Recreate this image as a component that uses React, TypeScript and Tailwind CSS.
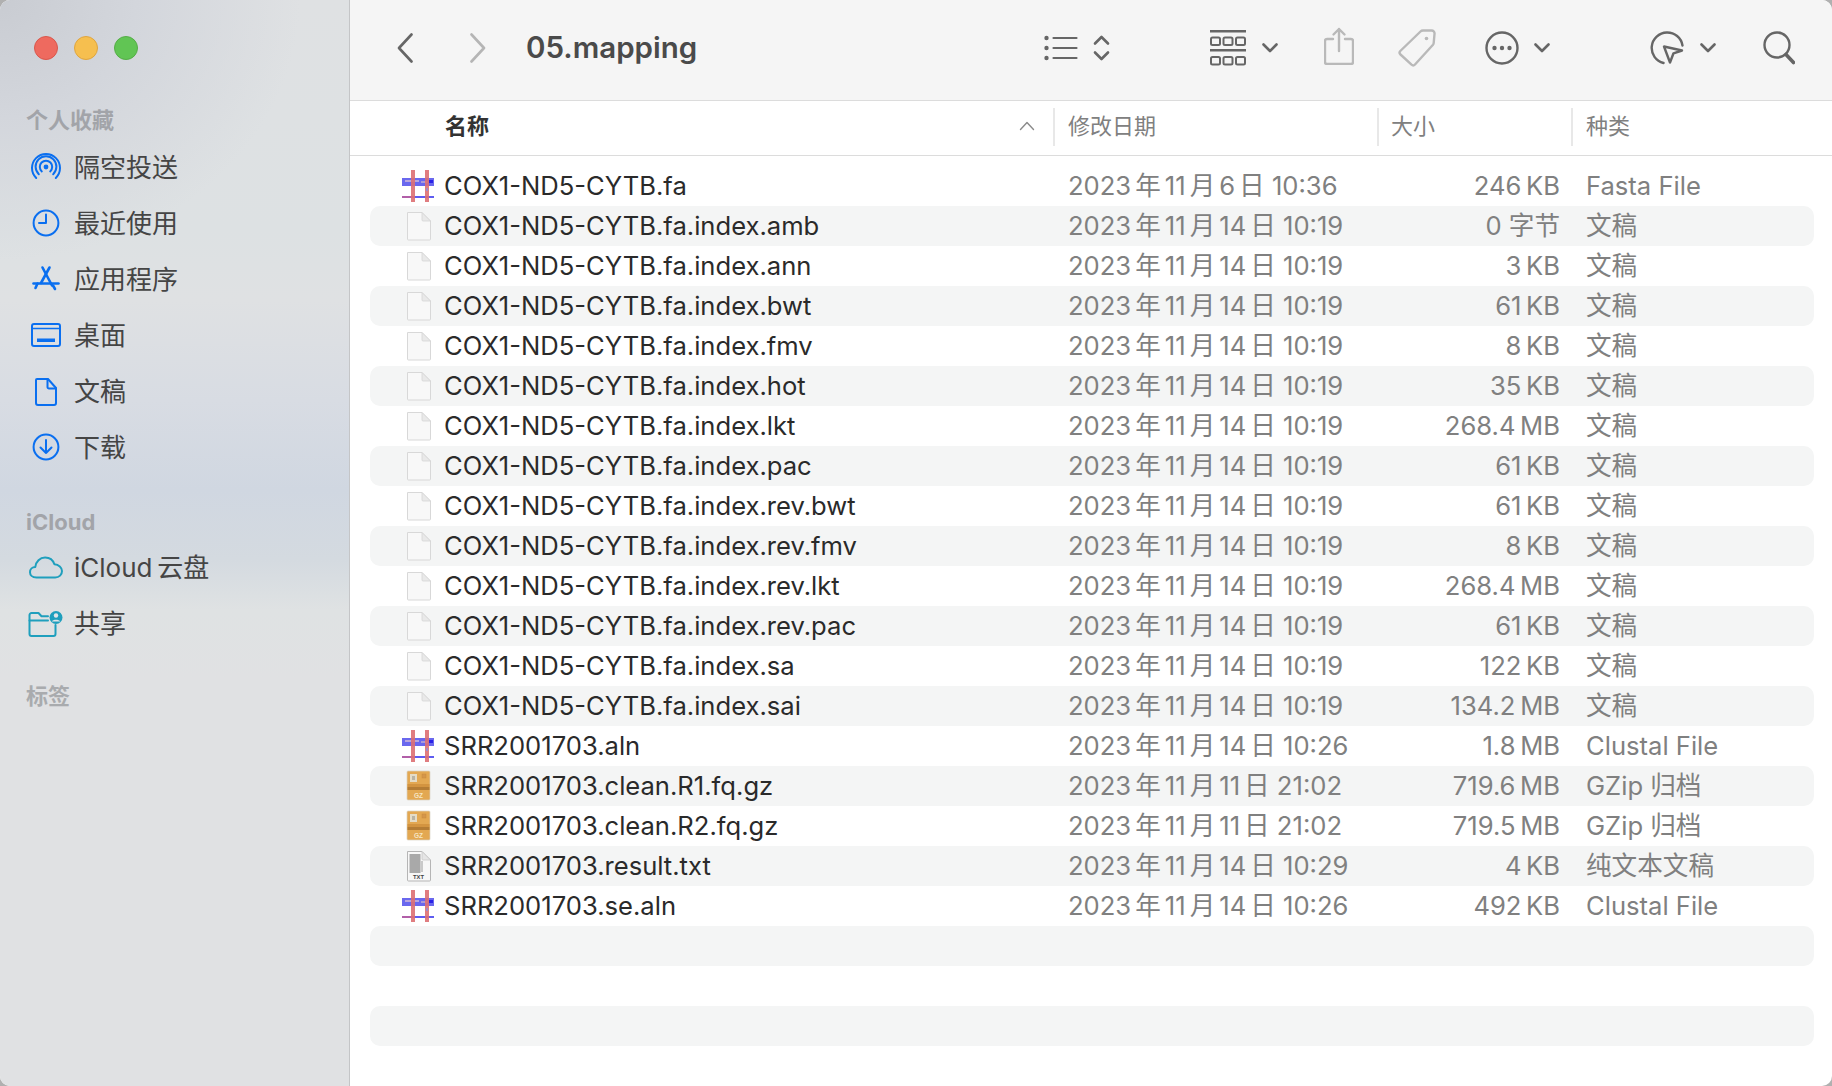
const files = [
  { name: 'COX1-ND5-CYTB.fa', date: '2023年11月6日 10:36', size: '246 KB', kind: 'Fasta File', icon: 'seq' },
  { name: 'COX1-ND5-CYTB.fa.index.amb', date: '2023年11月14日 10:19', size: '0 字节', kind: '文稿', icon: 'doc' },
  { name: 'COX1-ND5-CYTB.fa.index.ann', date: '2023年11月14日 10:19', size: '3 KB', kind: '文稿', icon: 'doc' },
  { name: 'COX1-ND5-CYTB.fa.index.bwt', date: '2023年11月14日 10:19', size: '61 KB', kind: '文稿', icon: 'doc' },
  { name: 'COX1-ND5-CYTB.fa.index.fmv', date: '2023年11月14日 10:19', size: '8 KB', kind: '文稿', icon: 'doc' },
  { name: 'COX1-ND5-CYTB.fa.index.hot', date: '2023年11月14日 10:19', size: '35 KB', kind: '文稿', icon: 'doc' },
  { name: 'COX1-ND5-CYTB.fa.index.lkt', date: '2023年11月14日 10:19', size: '268.4 MB', kind: '文稿', icon: 'doc' },
  { name: 'COX1-ND5-CYTB.fa.index.pac', date: '2023年11月14日 10:19', size: '61 KB', kind: '文稿', icon: 'doc' },
  { name: 'COX1-ND5-CYTB.fa.index.rev.bwt', date: '2023年11月14日 10:19', size: '61 KB', kind: '文稿', icon: 'doc' },
  { name: 'COX1-ND5-CYTB.fa.index.rev.fmv', date: '2023年11月14日 10:19', size: '8 KB', kind: '文稿', icon: 'doc' },
  { name: 'COX1-ND5-CYTB.fa.index.rev.lkt', date: '2023年11月14日 10:19', size: '268.4 MB', kind: '文稿', icon: 'doc' },
  { name: 'COX1-ND5-CYTB.fa.index.rev.pac', date: '2023年11月14日 10:19', size: '61 KB', kind: '文稿', icon: 'doc' },
  { name: 'COX1-ND5-CYTB.fa.index.sa', date: '2023年11月14日 10:19', size: '122 KB', kind: '文稿', icon: 'doc' },
  { name: 'COX1-ND5-CYTB.fa.index.sai', date: '2023年11月14日 10:19', size: '134.2 MB', kind: '文稿', icon: 'doc' },
  { name: 'SRR2001703.aln', date: '2023年11月14日 10:26', size: '1.8 MB', kind: 'Clustal File', icon: 'seq' },
  { name: 'SRR2001703.clean.R1.fq.gz', date: '2023年11月11日 21:02', size: '719.6 MB', kind: 'GZip 归档', icon: 'gz' },
  { name: 'SRR2001703.clean.R2.fq.gz', date: '2023年11月11日 21:02', size: '719.5 MB', kind: 'GZip 归档', icon: 'gz' },
  { name: 'SRR2001703.result.txt', date: '2023年11月14日 10:29', size: '4 KB', kind: '纯文本文稿', icon: 'txt' },
  { name: 'SRR2001703.se.aln', date: '2023年11月14日 10:26', size: '492 KB', kind: 'Clustal File', icon: 'seq' }
]

const blue = '#0a6ff0'
const teal = '#1f9fbd'

// sizes use a narrow gap before the unit
const tightSize = (size: string) => size.replace(/ ([KM]B)/, '\u2009$1')

function SeqIcon() {
  return (
    <svg width="32" height="40" viewBox="0 0 32 40">
      <rect x="0" y="12" width="32" height="8" fill="#6a68ee" />
      <rect x="3" y="14" width="14" height="2" fill="#b9a6dc" />
      <rect x="19" y="15" width="7" height="2" fill="#a99ad8" />
      <rect x="27" y="14" width="4" height="3" fill="#2a22e8" />
      <rect x="0" y="30" width="12" height="2" fill="#b25fa8" />
      <rect x="12" y="30" width="20" height="2" fill="#5f5cf0" />
      <rect x="9" y="4" width="4" height="32" fill="#dd6f72" fillOpacity="0.9" />
      <rect x="23" y="4" width="4" height="32" fill="#dd6f72" fillOpacity="0.9" />
      <rect x="24" y="22" width="2" height="3" fill="#a08ac8" />
    </svg>
  )
}

function DocIcon() {
  return (
    <svg width="32" height="40" viewBox="0 0 32 40">
      <path d="M5.5 6.5H20L28.5 15V33a1 1 0 0 1-1 1h-21a1 1 0 0 1-1-1z" fill="#f8f8f8" stroke="#d8d8d8" />
      <path d="M20 6.5V14a1 1 0 0 0 1 1h7.5z" fill="#e9e9e9" stroke="#d4d4d4" strokeWidth="0.8" />
    </svg>
  )
}

function GzIcon() {
  return (
    <svg width="32" height="40" viewBox="0 0 32 40">
      <rect x="5" y="5" width="23" height="29" rx="1" fill="#e3a852" stroke="#d9d2c4" strokeWidth="0.7" />
      <rect x="5.5" y="18" width="22" height="3" fill="#d39440" />
      <rect x="5.5" y="21" width="22" height="3" fill="#b47c34" />
      <rect x="8" y="8" width="7" height="8" fill="#e5dcc6" />
      <rect x="10" y="10" width="3" height="4" fill="#b9b3a4" />
      <rect x="20" y="8" width="4" height="4" fill="#d4964a" stroke="#c98a3e" strokeWidth="0.5" />
      <text x="16.5" y="32" textAnchor="middle" fontSize="6.5" fontWeight="700" fill="#f6e6c4" fontFamily="Liberation Sans, sans-serif">GZ</text>
    </svg>
  )
}

function TxtIcon() {
  return (
    <svg width="32" height="40" viewBox="0 0 32 40">
      <path d="M5.5 5.5H20L28.5 14V34a1 1 0 0 1-1 1h-21a1 1 0 0 1-1-1z" fill="#f7f7f7" stroke="#b5b5b5" />
      <path d="M20 5.5V13a1 1 0 0 0 1 1h7.5z" fill="#e5e5e5" stroke="#c9c9c9" strokeWidth="0.8" />
      <rect x="7.5" y="8" width="11" height="19" fill="#a9a9a9" />
      <rect x="18.5" y="15" width="2.5" height="11" fill="#c9c9c9" />
      <text x="16.5" y="33" textAnchor="middle" fontSize="5.8" fontWeight="700" fill="#444" fontFamily="Liberation Sans, sans-serif">TXT</text>
    </svg>
  )
}

function FileIcon({ type }: { type: string }) {
  if (type === 'seq') return <SeqIcon />
  if (type === 'gz') return <GzIcon />
  if (type === 'txt') return <TxtIcon />
  return <DocIcon />
}

function Chevron({ className }: { className: string }) {
  return (
    <svg className={className} width="16" height="10" viewBox="0 0 16 10" fill="none" stroke="#666" strokeWidth="2.6" strokeLinecap="round" strokeLinejoin="round">
      <path d="M1.5 1.5 8 8l6.5-6.5" />
    </svg>
  )
}

function SideIcon({ name }: { name: string }) {
  const stroke = name === 'cloud' || name === 'shared' ? teal : blue
  return (
    <svg width="36" height="36" viewBox="0 0 36 36" fill="none" stroke={stroke} strokeWidth="2" strokeLinecap="round" strokeLinejoin="round">
      {name === 'airdrop' && (
        <>
          <circle cx="18" cy="18" r="2.4" fill={stroke} stroke="none" />
          <path d="M13.8 22.4a6.2 6.2 0 1 1 8.4 0" />
          <path d="M10.8 25.2a10.4 10.4 0 1 1 14.4 0" />
          <path d="M8.2 29a14 14 0 1 1 19.6 0" />
        </>
      )}
      {name === 'clock' && (
        <>
          <circle cx="18" cy="18" r="12.4" />
          <path d="M18 9.5V18h-7" />
        </>
      )}
      {name === 'apps' && (
        <g strokeWidth="2.6">
          <path d="M14.5 6.5 24 24.5" />
          <path d="M21.5 6.5 13 22" />
          <path d="M5.5 22.5h25" />
          <path d="M9.5 22.5 7.5 27" />
          <path d="M25 24.5 27 28" />
        </g>
      )}
      {name === 'desktop' && (
        <>
          <rect x="4" y="7" width="28" height="22" rx="2" />
          <path d="M4 11.5h28" strokeWidth="1.4" />
          <rect x="9" y="21.5" width="18" height="3.5" fill={stroke} stroke="none" />
        </>
      )}
      {name === 'doc' && (
        <>
          <path d="M9 6h11l8 9v15a2 2 0 0 1-2 2H10a2 2 0 0 1-2-2V7a1 1 0 0 1 1-1z" />
          <path d="M19.5 6v8a1.5 1.5 0 0 0 1.5 1.5h7" />
        </>
      )}
      {name === 'download' && (
        <>
          <circle cx="18" cy="18" r="12.4" />
          <path d="M18 11v13M12.5 18.5 18 24l5.5-5.500" />
        </>
      )}
      {name === 'cloud' && (
        <path d="M8.500 28.500C4 28.500 2 25.800 2 23.200c0-3 2.400-5.200 5.300-5.200.5-5.500 4.700-9.500 9.800-9.500 4.600 0 8 2.800 9.300 6.800 4.200.2 7.600 3.100 7.600 6.800 0 3.600-2.800 6.400-6.800 6.400z" />
      )}
      {name === 'shared' && (
        <>
          <path d="M27.500 20v9a2 2 0 0 1-2 2H3.500a2 2 0 0 1-2-2V10a2 2 0 0 1 2-2h7l3 3.200H20" />
          <path d="M1.500 15.500H20" />
          <circle cx="28" cy="12.500" r="6.500" fill={stroke} stroke="none" />
          <circle cx="28" cy="10.500" r="2.200" fill="#e2e5e8" stroke="none" />
          <path d="M23.800 16.500c1-2.300 7.400-2.300 8.400 0z" fill="#e2e5e8" stroke="none" />
        </>
      )}
    </svg>
  )
}

const favorites = [
  { label: '隔空投送', icon: 'airdrop' },
  { label: '最近使用', icon: 'clock' },
  { label: '应用程序', icon: 'apps' },
  { label: '桌面', icon: 'desktop' },
  { label: '文稿', icon: 'doc' },
  { label: '下载', icon: 'download' }
]

const cloudItems = [
  { label: 'iCloud\u2009云盘', icon: 'cloud' },
  { label: '共享', icon: 'shared' }
]

function SideItem({ label, icon }: { label: string; icon: string }) {
  return (
    <div className="flex h-[56px] items-center gap-[10px] pl-[28px] text-[26px] text-[#454545]">
      <SideIcon name={icon} />
      <span>{label}</span>
    </div>
  )
}

function Sidebar() {
  return (
    <aside className="w-[350px] shrink-0 border-r border-[#c4c5c7] bg-[radial-gradient(ellipse_300px_260px_at_0px_0px,#c9ccd2_0%,#d3d6dc_45%,transparent_100%),linear-gradient(180deg,#dfe1e3_0px,#dde1e3_230px,#dfe1e3_300px,#d8dce3_400px,#d0d7e1_490px,#d4dae0_560px,#dfe2e3_610px,#e0e1e3_680px,#e0e1e3_100%)]">
      <div className="flex gap-[16px] pl-[34px] pt-[36px]">
        <div className="h-[24px] w-[24px] rounded-full border border-[#d9574c] bg-[#ee6a5f]" />
        <div className="h-[24px] w-[24px] rounded-full border border-[#dfa53f] bg-[#f6bf4f]" />
        <div className="h-[24px] w-[24px] rounded-full border border-[#55ad47] bg-[#61c554]" />
      </div>
      <div className="mt-[43px] mb-[2px] flex h-[34px] items-center pl-[26px] text-[22px] font-bold text-[#a2a4a9]">个人收藏</div>
      {favorites.map((item) => (
        <SideItem key={item.label} {...item} />
      ))}
      <div className="mt-[30px] flex h-[34px] items-center pl-[26px] text-[22px] font-bold text-[#a2a4a9]">iCloud</div>
      {cloudItems.map((item) => (
        <SideItem key={item.label} {...item} />
      ))}
      <div className="mt-[28px] flex h-[34px] items-center pl-[26px] text-[22px] font-bold text-[#a9abae]">标签</div>
    </aside>
  )
}

function Toolbar() {
  return (
    <div className="flex h-[101px] shrink-0 items-center border-b border-[#dcdcdc] bg-[#f5f5f5] pb-[5px] pr-[37px]">
      <svg className="ml-[47px]" width="16" height="30" viewBox="0 0 16 30" fill="none" stroke="#666" strokeWidth="2.6" strokeLinecap="round" strokeLinejoin="round">
        <path d="M14.500 1.500 2 15l12.500 13.500" />
      </svg>
      <svg className="ml-[57px]" width="16" height="30" viewBox="0 0 16 30" fill="none" stroke="#b5b5b5" strokeWidth="2.6" strokeLinecap="round" strokeLinejoin="round">
        <path d="M1.500 1.500 14 15 1.500 28.500" />
      </svg>
      <div className="ml-[40px] flex-1 text-[29.5px] font-semibold text-[#4a4a4a]">05.mapping</div>

      <svg width="66" height="26" viewBox="0 0 66 26" fill="none" stroke="#666" strokeLinecap="round" strokeLinejoin="round">
        <g fill="#666" stroke="none">
          <circle cx="2.500" cy="3" r="2.200" />
          <circle cx="2.500" cy="13" r="2.200" />
          <circle cx="2.500" cy="23" r="2.200" />
        </g>
        <path d="M9.500 3h23M9.500 13h23M9.500 23h23" strokeWidth="2.200" />
        <path d="M51 8.500 57.500 2 64 8.500M51 17.500l6.500 6.500 6.500-6.500" strokeWidth="2.600" />
      </svg>

      <svg className="ml-[100px]" width="36" height="36" viewBox="0 0 36 36" fill="none" stroke="#666">
        <path d="M0 1.200h36M0 20.200h36" strokeWidth="2.400" />
        <g strokeWidth="2">
          <rect x="1" y="7.500" width="9" height="7.500" rx="1.500" />
          <rect x="13.500" y="7.500" width="9" height="7.500" rx="1.500" />
          <rect x="26" y="7.500" width="9" height="7.500" rx="1.500" />
          <rect x="1" y="27" width="9" height="7.500" rx="1.500" />
          <rect x="13.500" y="27" width="9" height="7.500" rx="1.500" />
          <rect x="26" y="27" width="9" height="7.500" rx="1.500" />
        </g>
      </svg>
      <Chevron className="ml-[16px]" />

      <svg className="ml-[46px] mb-[3px]" width="30" height="38" viewBox="0 0 30 38" fill="none" stroke="#b9b9b9" strokeWidth="2.400" strokeLinecap="round" strokeLinejoin="round">
        <path d="M9 12H3a2 2 0 0 0-2 2v21a2 2 0 0 0 2 2h24a2 2 0 0 0 2-2V14a2 2 0 0 0-2-2h-6" />
        <path d="M15 24V2M9.500 7.500 15 2l5.500 5.500" />
      </svg>

      <svg className="ml-[44px]" width="38" height="38" viewBox="0 0 38 38" fill="none" stroke="#b9b9b9" strokeWidth="2.400" strokeLinejoin="round">
        <path d="M25 1.500h8.500a3 3 0 0 1 3 3.500l-.8 9a3 3 0 0 1-.7 1.700L17 35.500a2.500 2.500 0 0 1-3.500.2l-11-10.200a2.500 2.500 0 0 1-.2-3.500L22.500 2.500A3.500 3.500 0 0 1 25 1.500z" />
        <circle cx="28.500" cy="9.500" r="1.800" fill="#b9b9b9" stroke="none" />
      </svg>

      <svg className="ml-[49px]" width="34" height="34" viewBox="0 0 34 34" fill="none" stroke="#666" strokeWidth="2.400">
        <circle cx="17" cy="17" r="15.500" />
        <g fill="#666" stroke="none">
          <circle cx="9.500" cy="17" r="2.200" />
          <circle cx="17" cy="17" r="2.200" />
          <circle cx="24.500" cy="17" r="2.200" />
        </g>
      </svg>
      <Chevron className="ml-[15px]" />

      <svg className="ml-[100px]" width="34" height="34" viewBox="0 0 34 34" fill="none" stroke="#666" strokeWidth="2.400" strokeLinecap="round" strokeLinejoin="round">
        <path d="M32.500 14.500A15.500 15.500 0 1 0 13.500 32" />
        <path d="M14 15.500l18 4-8.500 2.800-3.500 9.200z" />
      </svg>
      <Chevron className="ml-[16px]" />

      <svg className="ml-[47px]" width="32" height="34" viewBox="0 0 32 34" fill="none" stroke="#666" strokeLinecap="round">
        <circle cx="14" cy="14" r="12.500" strokeWidth="2.400" />
        <path d="M23 23.500 30.500 31.500" strokeWidth="3.600" />
      </svg>
    </div>
  )
}

function TableHeader() {
  return (
    <div className="flex h-[55px] shrink-0 items-center border-b border-[#dcdcdc] bg-white pb-[2px] text-[22px] text-[#808080]">
      <div className="flex h-[38px] w-[703px] items-center pb-[2px] pl-[95px] pr-[18px]">
        <span className="flex-1 font-bold text-[#333]">名称</span>
        <svg width="16" height="10" viewBox="0 0 16 10" fill="none" stroke="#8a8a8a" strokeWidth="1.400" strokeLinecap="round" strokeLinejoin="round">
          <path d="M1.500 8.500 8 1.500l6.500 7" />
        </svg>
      </div>
      <div className="flex h-[38px] w-[324px] items-center border-l-2 border-[#e8e8e8] pb-[2px] pl-[13px]">修改日期</div>
      <div className="flex h-[38px] w-[194px] items-center border-l-2 border-[#e8e8e8] pb-[2px] pl-[12px]">大小</div>
      <div className="flex h-[38px] items-center border-l-2 border-[#e8e8e8] pb-[2px] pl-[13px]">种类</div>
    </div>
  )
}

// Finder puts a small gap between digits and the CJK date characters
function DateText({ value }: { value: string }) {
  const parts = value.split(/([年月日])/)
  return (
    <>
      {parts.map((part, i) =>
        i % 2 === 1 ? (
          <span key={i} className={part === '日' ? 'pl-[4px]' : 'px-[4px]'}>
            {part}
          </span>
        ) : (
          <span key={i}>{part}</span>
        )
      )}
    </>
  )
}

export default function App() {
  return (
    <div className="h-[1086px] w-[1832px] overflow-hidden bg-[#b0b0b0] font-['Inter','Noto_Sans_CJK_SC',sans-serif]">
      <div className="flex h-full overflow-hidden rounded-[10px] bg-white">
        <Sidebar />
        <main className="flex min-w-0 flex-1 flex-col">
          <Toolbar />
          <TableHeader />
          <div className="ml-[20px] mr-[18px] pt-[10px]">
            {files.map((file, i) => (
              <div key={file.name} className={`flex h-[40px] items-center rounded-[10px] text-[25.6px] ${i % 2 === 1 ? 'bg-[#f4f5f5]' : ''}`}>
                <div className="w-[74px] shrink-0 pl-[32px]">
                  <FileIcon type={file.icon} />
                </div>
                <div className="w-[624px] shrink-0 pt-[1px] text-[#2a2a2a]">{file.name}</div>
                <div className="w-[300px] shrink-0 pt-[1px] text-[#808080]">
                  <DateText value={file.date} />
                </div>
                <div className="w-[192px] shrink-0 pt-[1px] text-right text-[#808080]">{tightSize(file.size)}</div>
                <div className="pl-[26px] pt-[1px] text-[#808080]">{file.kind}</div>
              </div>
            ))}
            <div className="h-[40px] rounded-[10px] bg-[#f4f5f5]" />
            <div className="h-[40px]" />
            <div className="h-[40px] rounded-[10px] bg-[#f4f5f5]" />
          </div>
        </main>
      </div>
    </div>
  )
}
